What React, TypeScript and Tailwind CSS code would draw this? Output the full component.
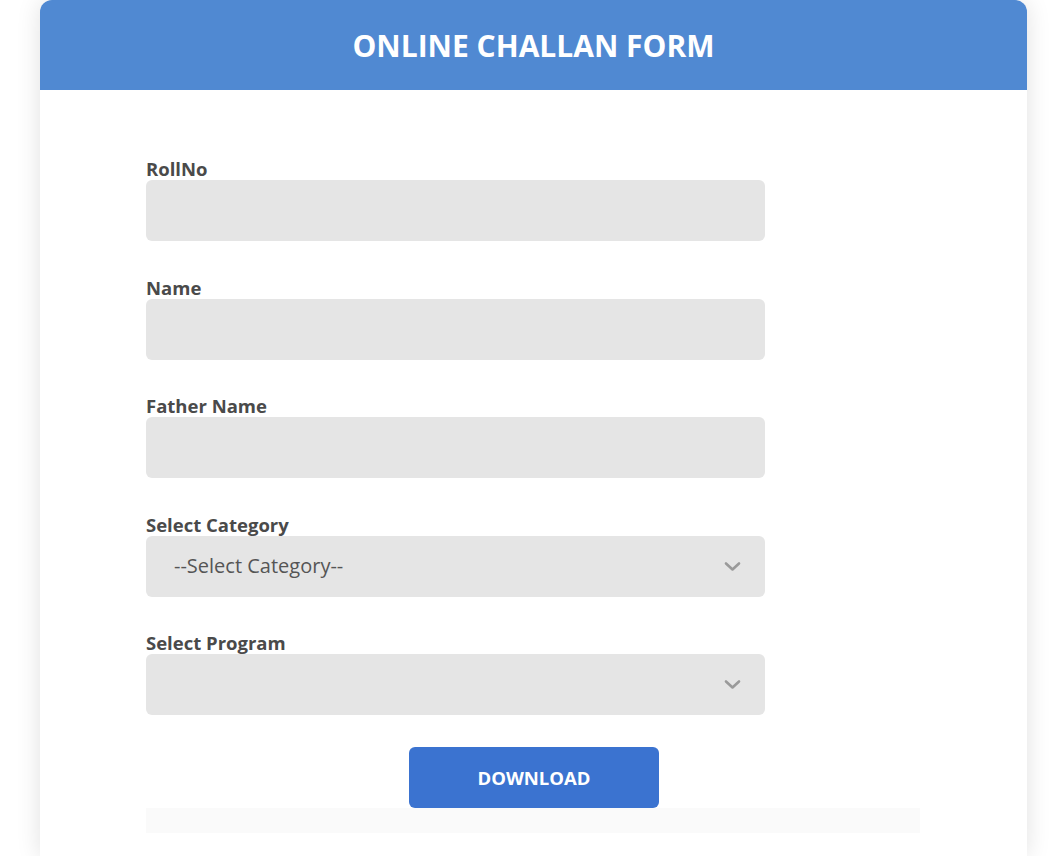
const font = { fontFamily: '"Open Sans", "Noto Sans", sans-serif' };

function Chevron() {
    return (
        <svg width="17" height="11" viewBox="0 0 17 11" fill="none">
            <path d="M2 2.5 L8.5 8.5 L15 2.5" stroke="#9a9a9a" strokeWidth="2.6" strokeLinecap="round" strokeLinejoin="round" />
        </svg>
    );
}

function TextField({ label }: { label: string }) {
    return (
        <div className="flex flex-col">
            <label className="text-[18.5px] leading-[23px] font-bold text-[#4a4a4a]">{label}</label>
            <div className="h-[61px] rounded-md bg-[#e5e5e5]" />
        </div>
    );
}

function SelectField({ label, value }: { label: string; value?: string }) {
    return (
        <div className="flex flex-col">
            <label className="text-[18.5px] leading-[23px] font-bold text-[#4a4a4a]">{label}</label>
            <div className="h-[61px] rounded-md bg-[#e5e5e5] flex items-center justify-between pl-7 pr-[24px]">
                <span className="text-[20px] text-[#555]">{value}</span>
                <Chevron />
            </div>
        </div>
    );
}

export default function App() {
    return (
        <div className="min-h-screen bg-white" style={font}>
            <div className="ml-10 w-[987px] rounded-t-xl bg-white shadow-[0_0_24px_rgba(0,0,0,0.12)] overflow-hidden">
                <div className="h-[90px] bg-[#5089d2] flex items-center justify-center">
                    <h1 className="text-[30px] font-bold text-white">ONLINE CHALLAN FORM</h1>
                </div>
                <div className="pt-[67px] pl-[106px] pb-6">
                    <div className="w-[774px]">
                        <div className="w-[619px] flex flex-col gap-[34.5px]">
                            <TextField label="RollNo" />
                            <TextField label="Name" />
                            <TextField label="Father Name" />
                            <SelectField label="Select Category" value="--Select Category--" />
                            <SelectField label="Select Program" />
                        </div>
                        <div className="pl-[263px] pt-[32px]">
                            <button className="w-[250px] h-[61px] rounded-md bg-[#3b73d0] text-white text-[18.5px] font-bold">
                                DOWNLOAD
                            </button>
                        </div>
                        <div className="h-[25px] bg-[#fafafa]" />
                    </div>
                </div>
            </div>
        </div>
    );
}
